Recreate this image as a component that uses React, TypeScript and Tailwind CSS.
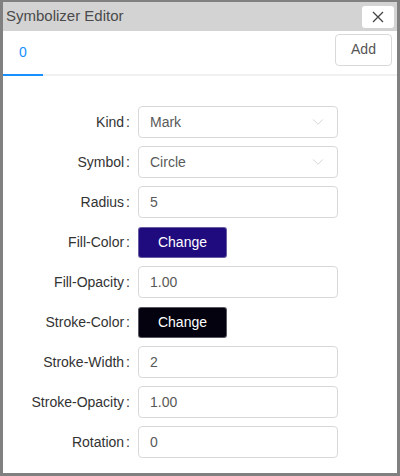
import { ChevronDown } from "lucide-react";

const rows: { label: string; kind: "select" | "input" | "color"; value: string; color?: string }[] = [
  { label: "Kind", kind: "select", value: "Mark" },
  { label: "Symbol", kind: "select", value: "Circle" },
  { label: "Radius", kind: "input", value: "5" },
  { label: "Fill-Color", kind: "color", value: "Change", color: "#1f0b7e" },
  { label: "Fill-Opacity", kind: "input", value: "1.00" },
  { label: "Stroke-Color", kind: "color", value: "Change", color: "#04020f" },
  { label: "Stroke-Width", kind: "input", value: "2" },
  { label: "Stroke-Opacity", kind: "input", value: "1.00" },
  { label: "Rotation", kind: "input", value: "0" },
];

const App = () => {
  return (
    <div
      className="w-[400px] h-[476px] bg-white border-[3px] border-t-2 border-[#808080] flex flex-col overflow-hidden"
      style={{ fontFamily: '"Liberation Sans", Arial, sans-serif' }}
    >
      {/* title bar */}
      <div className="h-[29px] bg-[#d3d3d3] flex items-center justify-between pl-[3px] pr-[3px] shrink-0">
        <span className="text-[15px] text-[#4a4a4a]">Symbolizer Editor</span>
        <button className="w-[32px] h-[22px] bg-white rounded-[3px] flex items-center justify-center">
          <svg width="12" height="12" viewBox="0 0 12 12" stroke="#444" strokeWidth="1.3" fill="none">
            <path d="M1 1 L11 11 M11 1 L1 11" />
          </svg>
        </button>
      </div>

      {/* tabs */}
      <div className="h-[45px] flex items-stretch justify-between border-b-2 border-[#f0f0f0] shrink-0">
        <div className="w-[40px] flex items-center justify-center border-b-2 border-[#1890ff] -mb-[2px] text-[14px] text-[#1890ff]">
          0
        </div>
        <div className="flex items-center pr-[5px] pb-[6px]">
          <button className="w-[57px] h-[32px] border border-[#d9d9d9] rounded-[4px] text-[14px] text-[#555] bg-white">
            Add
          </button>
        </div>
      </div>

      {/* form */}
      <div className="flex flex-col gap-[8px] pt-[30px]">
        {rows.map((r) => (
          <div key={r.label} className="flex items-center h-[32px]">
            <div className="w-[127px] flex justify-end items-center text-[14px] text-[#333]">
              <span>{r.label}</span>
              <span className="ml-[2px]">:</span>
            </div>
            <div className="ml-[8px]">
              {r.kind === "color" ? (
                <button
                  className="w-[89px] h-[31px] rounded-[3px] border border-[#d9d9d9]/40 text-white text-[14px]"
                  style={{ backgroundColor: r.color }}
                >
                  {r.value}
                </button>
              ) : (
                <div className="w-[200px] h-[32px] border border-[#d9d9d9] rounded-[4px] flex items-center justify-between pl-[11px] pr-[10px] text-[14px] text-[#595959]">
                  <span>{r.value}</span>
                  {r.kind === "select" && (
                    <ChevronDown size={18} strokeWidth={0.9} color="#bfbfbf" />
                  )}
                </div>
              )}
            </div>
          </div>
        ))}
      </div>
    </div>
  );
};

export default App;
